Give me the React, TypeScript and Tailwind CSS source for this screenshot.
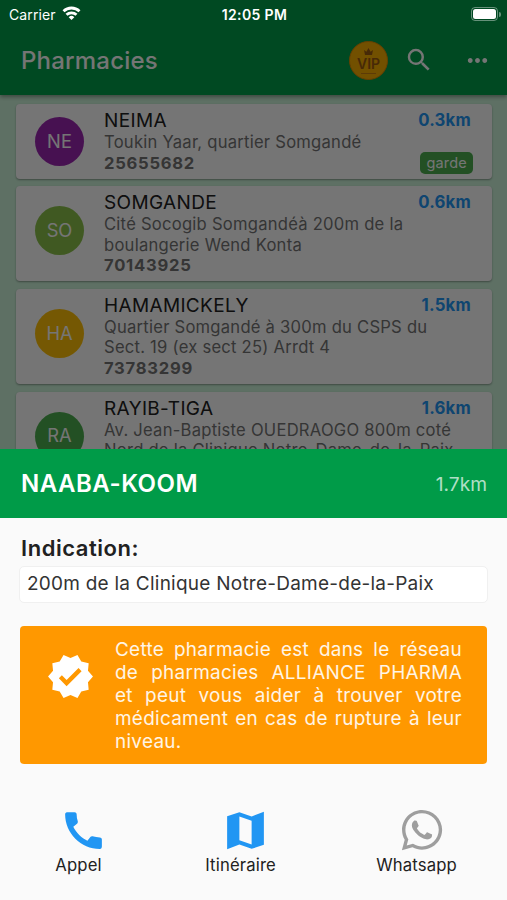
import { clsx } from "clsx";
import { FaWhatsapp } from "react-icons/fa";
import { MdCall, MdMoreHoriz, MdSearch, MdVerified } from "react-icons/md";

type Pharmacy = {
  name: string;
  initials: string;
  color: string;
  address: string[];
  phone?: string;
  distance: string;
  onDuty?: boolean;
};

const pharmacies: Pharmacy[] = [
  {
    name: "NEIMA",
    initials: "NE",
    color: "bg-[#9c27b0]",
    address: ["Toukin Yaar, quartier Somgandé"],
    phone: "25655682",
    distance: "0.3km",
    onDuty: true,
  },
  {
    name: "SOMGANDE",
    initials: "SO",
    color: "bg-[#8bc34a]",
    address: ["Cité Socogib Somgandéà 200m de la", "boulangerie Wend Konta"],
    phone: "70143925",
    distance: "0.6km",
  },
  {
    name: "HAMAMICKELY",
    initials: "HA",
    color: "bg-[#ffc107]",
    address: ["Quartier Somgandé à 300m du CSPS du", "Sect. 19 (ex sect 25) Arrdt 4"],
    phone: "73783299",
    distance: "1.5km",
  },
  {
    name: "RAYIB-TIGA",
    initials: "RA",
    color: "bg-[#4caf50]",
    address: [
      "Av. Jean-Baptiste OUEDRAOGO 800m coté",
      "Nord de la Clinique Notre-Dame-de-la-Paix",
    ],
    distance: "1.6km",
  },
];

function StatusBar() {
  return (
    <div className="absolute inset-x-0 top-0 z-20 grid h-7 grid-cols-3 items-center pr-[6px] pl-[9px] text-[14px] text-white">
      <div className="flex items-center gap-[6px]">
        <span className="tracking-[0.1px]">Carrier</span>
        <svg className="mb-[2px]" width="19" height="14" viewBox="0 0 18 14" fill="none" stroke="currentColor" strokeWidth="2.8">
          <path d="M1 5.2a11.6 11.6 0 0 1 16 0" />
          <path d="M4 8.8a7.2 7.2 0 0 1 10 0" />
          <path d="M9 14 6.2 11.2a4 4 0 0 1 5.6 0z" fill="currentColor" stroke="none" />
        </svg>
      </div>
      <span className="pr-px text-center font-semibold tracking-[0.35px] whitespace-nowrap">12:05 PM</span>
      <div className="flex items-center justify-end">
        <div className="h-[14px] w-[27px] rounded-[4px] border border-white/40 p-px">
          <div className="h-full rounded-[2.5px] bg-white" />
        </div>
        <div className="ml-px h-[5px] w-[2px] rounded-r-full bg-white/40" />
      </div>
    </div>
  );
}

function VipBadge() {
  return (
    <div className="flex size-[39px] flex-col items-center rounded-full border border-[#e08a00] bg-[#f8ae00] pt-[6px] text-[#9c5a10]">
      <svg width="9" height="7" viewBox="0 0 9 7" fill="currentColor">
        <path d="M1 7 0 2l2.4 1.7L4.5 0l2.1 3.7L9 2 8 7z" />
      </svg>
      <span className="mt-[2px] text-[14px] leading-[14px] font-semibold">VIP</span>
      <div className="mt-[2px] h-px w-[15px] bg-[#c98210]" />
    </div>
  );
}

function AppBar() {
  return (
    <header className="flex h-[95px] items-end bg-[#009f4a] pr-[15px] pb-[15px] pl-[21px] text-white shadow-[0_2px_4px_rgba(0,0,0,0.35)]">
      <h1 className="flex-1 pb-[3px] text-[24px] leading-[32px] font-medium tracking-[0.2px]">Pharmacies</h1>
      <VipBadge />
      <MdSearch className="mb-[5px] ml-[16px] size-[30px]" />
      <MdMoreHoriz className="mb-[5px] ml-[29px] size-[29px] shrink-0" />
    </header>
  );
}

function PharmacyCard({ pharmacy }: { pharmacy: Pharmacy }) {
  return (
    <li className="flex items-start rounded-[4px] bg-white pr-[21px] pl-[19px] shadow-[0_1px_2px_rgba(0,0,0,0.35)]">
      <div
        className={clsx(
          "flex size-[49px] shrink-0 items-center justify-center rounded-full text-[18.3px] text-white",
          pharmacy.address.length > 1 ? "mt-[20px]" : "mt-[13px]",
          pharmacy.color,
        )}
      >
        {pharmacy.initials}
      </div>
      <div className="ml-[20px] flex-1 py-[5px] text-[16.6px] leading-[20.5px] tracking-[0.24px] whitespace-nowrap text-[#757575]">
        <div className="flex justify-between leading-[23px]">
          <h2 className="text-[19px] tracking-[0.35px] text-[#212121]">{pharmacy.name}</h2>
          <span className="text-[16.7px] font-bold text-[#2196f3]">{pharmacy.distance}</span>
        </div>
        {pharmacy.address.map((line) => (
          <p key={line}>{line}</p>
        ))}
        {pharmacy.phone && (
          <div className="flex h-[21px] items-center justify-between">
            <span className="font-bold tracking-[0.75px]">{pharmacy.phone}</span>
            {pharmacy.onDuty && (
              <span className="mr-[-2px] h-[22px] rounded-[5px] bg-[#4caf50] px-[6px] text-[14.5px] leading-[21px] tracking-[0.2px] text-white">
                garde
              </span>
            )}
          </div>
        )}
      </div>
    </li>
  );
}

function DetailSheet() {
  return (
    <section className="h-[451px] bg-[#fafafa] text-[#212121]">
      <div className="flex h-[68.5px] items-center justify-between bg-[#009b48] pt-[2px] pr-[20px] pl-[21px] text-white">
        <h2 className="text-[24px] font-semibold tracking-[0.5px]">NAABA-KOOM</h2>
        <span className="text-[19.2px] text-white/70">1.7km</span>
      </div>

      <div className="px-[20px] pt-[16px]">
        <h3 className="pl-px text-[22px] leading-[28px] font-semibold tracking-[0.55px]">Indication:</h3>
        <p className="-mx-px mt-[4px] flex h-[37px] items-center rounded-[5px] border border-[#f0f0f0] bg-white px-[7px] pt-px text-[19px] tracking-[0.24px] whitespace-nowrap text-[#333]">
          200m de la Clinique Notre-Dame-de-la-Paix
        </p>

        <div className="mt-[23px] flex h-[138px] rounded-[4px] bg-[#ff9800] pt-[12px] pr-[25px] pl-[26px] text-white">
          <MdVerified className="mt-[14px] size-[49px] shrink-0" />
          <div className="ml-[20px] flex-1 text-[18.9px] leading-[23.1px] tracking-[0.3px] whitespace-nowrap text-white/90">
            <p className="[text-align-last:justify]">Cette pharmacie est dans le réseau</p>
            <p className="[text-align-last:justify]">de pharmacies ALLIANCE PHARMA</p>
            <p className="[text-align-last:justify]">et peut vous aider à trouver votre</p>
            <p className="[text-align-last:justify]">médicament en cas de rupture à leur</p>
            <p>niveau.</p>
          </div>
        </div>
      </div>

      <div className="mt-[41px] flex justify-between pr-[50px] pl-[54px] text-[16.7px] leading-[20px] tracking-[0.15px]">
        <button className="flex flex-col items-center">
          <MdCall className="size-[49px] translate-x-[5px] translate-y-px text-[#2196f3]" />
          <span className="mt-px">Appel</span>
        </button>
        <button className="flex translate-x-px flex-col items-center">
          <svg className="size-[49px] translate-x-[5px] translate-y-px text-[#2196f3]" viewBox="0 0 24 24" fill="currentColor">
            <path d="M15 5.1 9 3 3 5.02v16.2l6-2.33 6 2.1 6-2.02V2.77L15 5.1zm0 13.79-6-2.11V5.11l6 2.11v11.67z" />
          </svg>
          <span className="mt-px">Itinéraire</span>
        </button>
        <button className="flex flex-col items-center">
          <FaWhatsapp className="mt-[2px] mb-[2px] size-[46px] translate-x-[5px] text-[#9e9e9e]" />
          Whatsapp
        </button>
      </div>
    </section>
  );
}

export default function App() {
  return (
    <div className="relative flex h-[900px] w-[507px] flex-col overflow-hidden font-['Inter',sans-serif]">
      <main className="relative h-[449px] shrink-0 overflow-hidden bg-[#cdf4da]">
        <AppBar />
        <ul className="flex flex-col gap-[7.7px] pt-[9px] pr-[15px] pl-[16px]">
          {pharmacies.map((pharmacy) => (
            <PharmacyCard key={pharmacy.name} pharmacy={pharmacy} />
          ))}
        </ul>
        {/* voile sombre derrière la fiche */}
        <div className="absolute inset-0 bg-black/54" />
      </main>
      <StatusBar />
      <DetailSheet />
    </div>
  );
}
